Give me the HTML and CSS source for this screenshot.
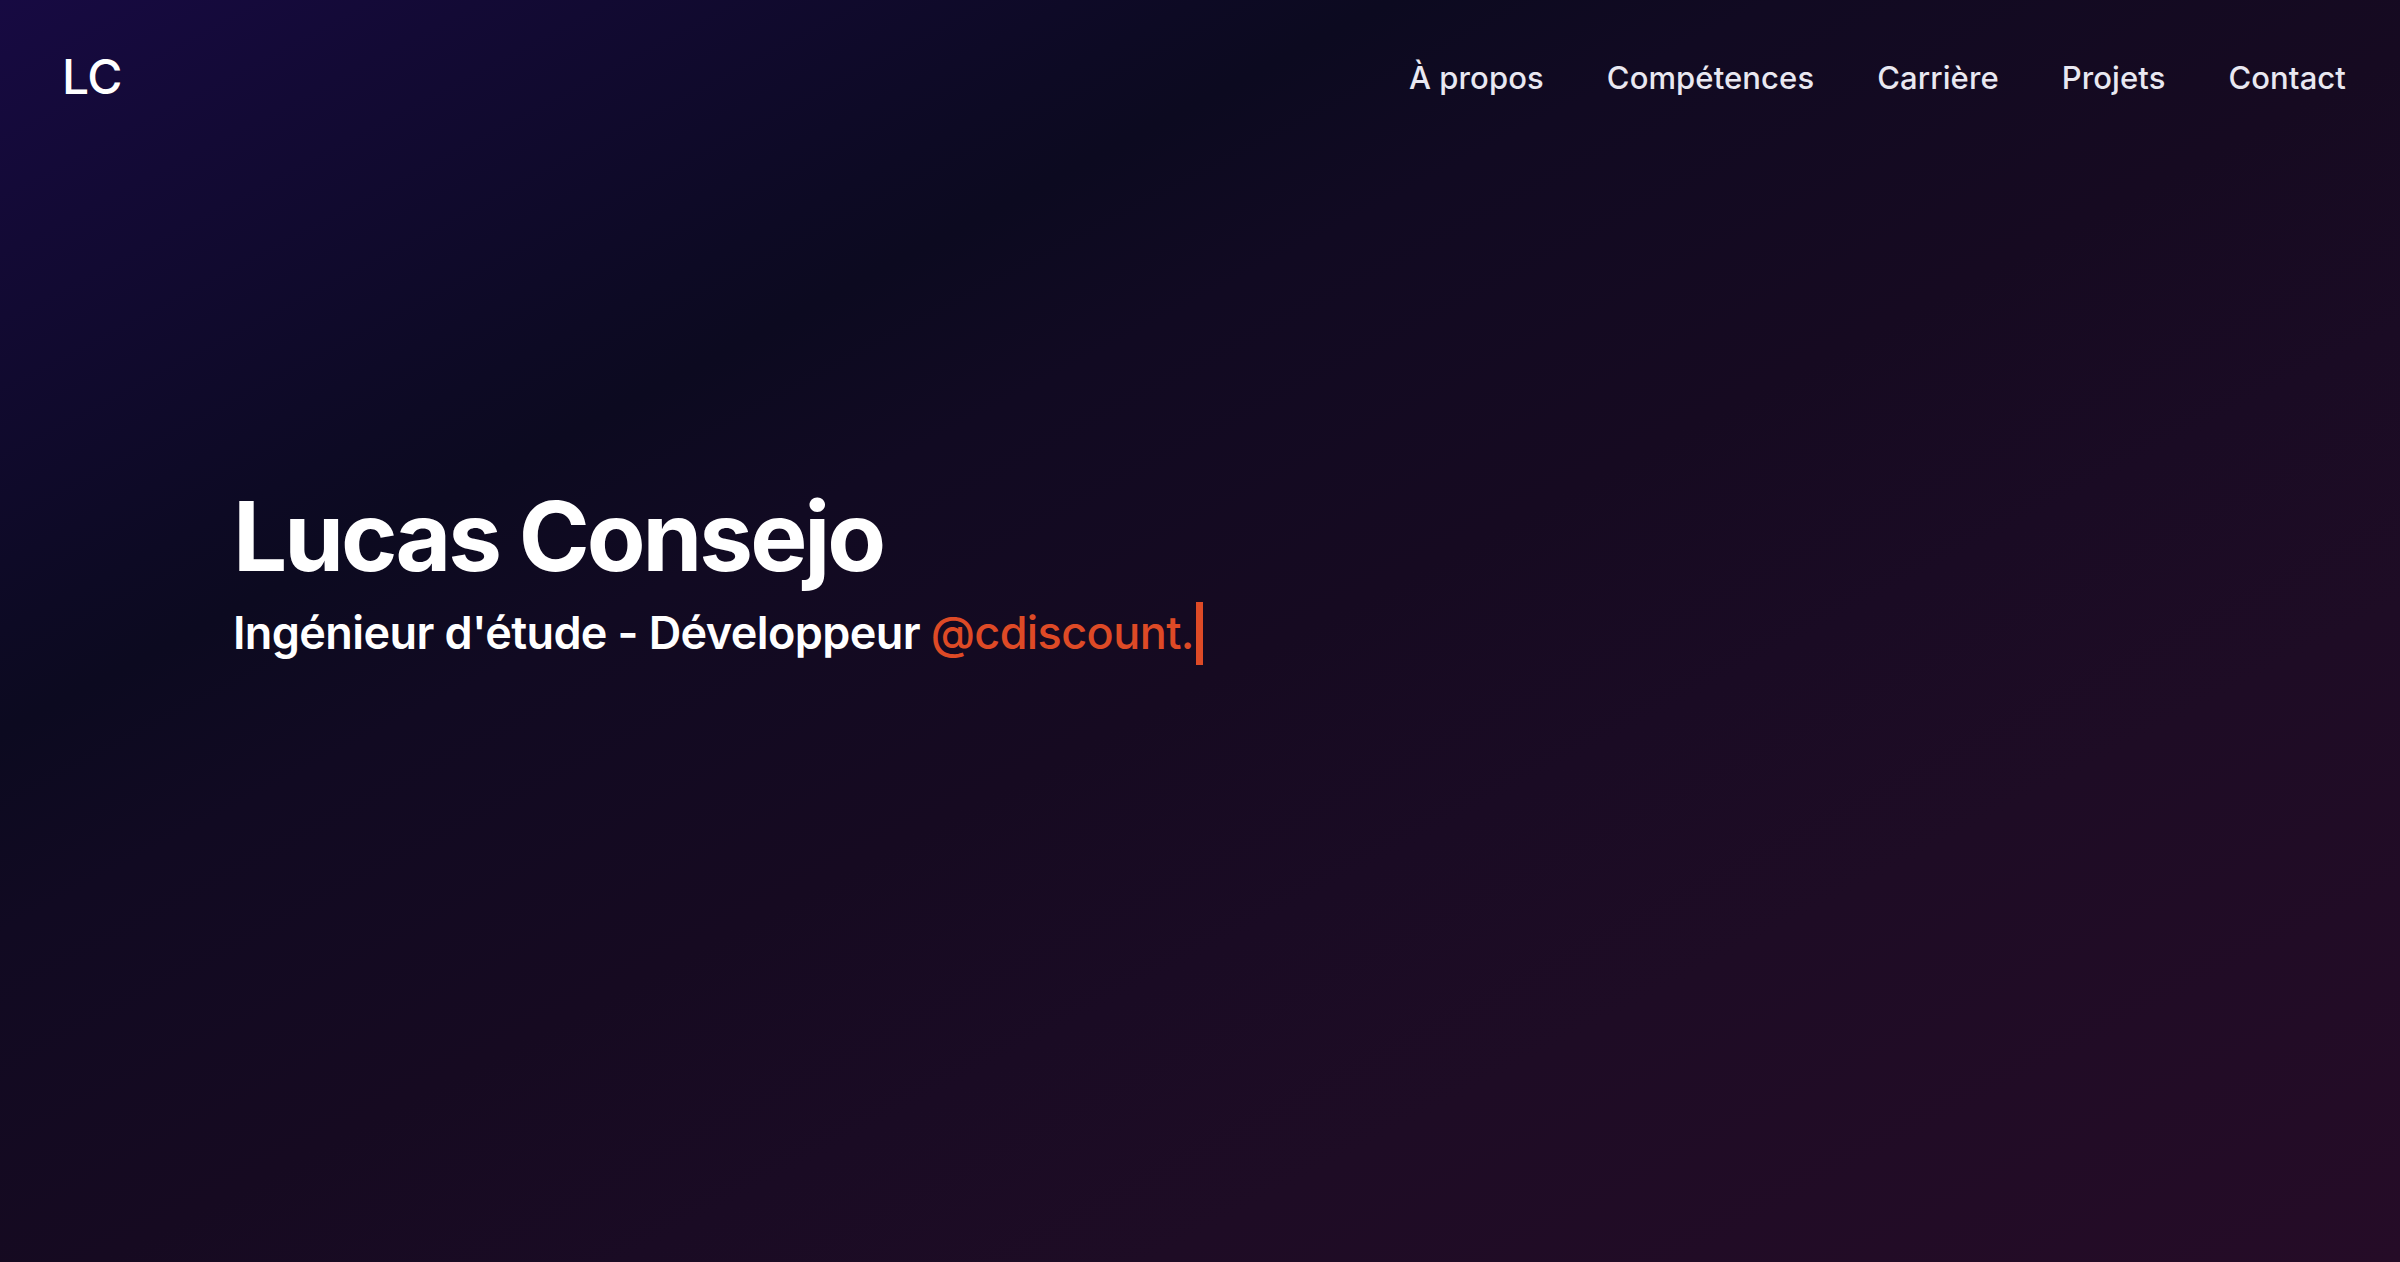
FILE: index.html
```html
<!DOCTYPE html>
<html lang="fr">
<head>
<meta charset="utf-8">
<title>Lucas Consejo</title>
<link rel="stylesheet" href="styles.css">
</head>
<body>
<div class="page">
  <header class="header">
    <a class="logo" href="#">LC</a>
    <nav class="nav">
      <a href="#about">À propos</a>
      <a href="#skills">Compétences</a>
      <a href="#career">Carrière</a>
      <a href="#projects">Projets</a>
      <a href="#contact">Contact</a>
    </nav>
  </header>
  <main class="hero">
    <h1 class="name">Lucas Consejo</h1>
    <p class="role">Ingénieur d'étude - Développeur <span class="accent">@cdiscount.</span><span class="cursor"></span></p>
  </main>
</div>
</body>
</html>
```
FILE: styles.css
```css
html, body {
  margin: 0;
  padding: 0;
  height: 100%;
}
body {
  font-family: Inter, "Noto Sans", sans-serif;
  color: #ffffff;
  background: #0c0a20;
}
.page {
  min-height: 100vh;
  box-sizing: border-box;
  background: linear-gradient(to bottom right,
    #170a42 0%,
    #130a35 10%,
    #0d0a24 25%,
    #0c0a20 29%,
    #110a22 37%,
    #160a21 52%,
    #1a0b24 63%,
    #1e0c25 74%,
    #250c27 100%);
}
.header {
  display: flex;
  align-items: center;
  justify-content: space-between;
  height: 154px;
  padding: 0 54px 0 62px;
}
.logo {
  color: #ffffff;
  text-decoration: none;
  font-size: 48px;
  font-weight: 500;
  line-height: 1;
  letter-spacing: -0.5px;
}
.nav {
  display: flex;
  gap: 63px;
}
.nav a {
  color: #e9e8f1;
  text-decoration: none;
  font-size: 31px;
  font-weight: 500;
  line-height: 1;
  letter-spacing: 0.1px;
}
.hero {
  padding: 330px 0 0 233px;
}
.name {
  margin: 0;
  font-size: 96px;
  font-weight: 700;
  line-height: 1.1;
  letter-spacing: -3px;
}
.role {
  margin: 12px 0 0;
  font-size: 45px;
  font-weight: 600;
  line-height: 1.3;
  letter-spacing: -0.6px;
  display: flex;
  align-items: center;
  white-space: pre;
}
.accent {
  color: #de4a26;
  font-weight: 500;
}
.cursor {
  display: inline-block;
  width: 7px;
  height: 63px;
  background: #de4a26;
  margin-left: 2px;
}
```
